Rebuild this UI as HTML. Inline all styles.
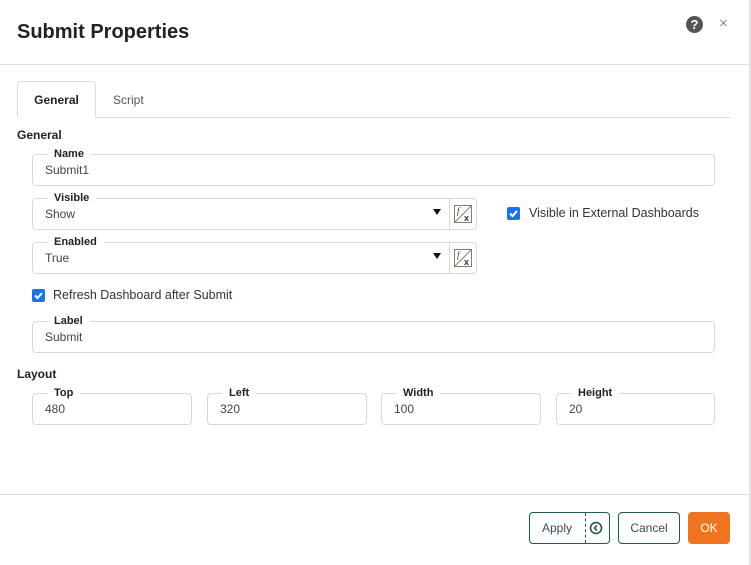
<!DOCTYPE html><html><head><style>
body{margin:0;width:751px;height:565px;background:#fff;font-family:"Liberation Sans",sans-serif;color:#333;position:relative;overflow:hidden}
.a{position:absolute}
.fld{position:absolute;border:1px solid #d8d8d8;border-radius:4px;box-sizing:border-box;height:32px}
.fld .lg{position:absolute;top:-8px;left:14px;background:#fff;padding:0 7px;font-size:11px;font-weight:bold;color:#222;line-height:14px}
.fld .v{position:absolute;left:12px;top:8px;font-size:12px;color:#444}
.fx{position:absolute;border:1px solid #d8d8d8;border-radius:0 4px 4px 0;box-sizing:border-box;width:28px;height:32px}
.cb{position:absolute;width:13px;height:13px;background:#1a73e8;border-radius:2px}
.sec{position:absolute;font-size:12px;font-weight:bold;color:#222}
.btn{position:absolute;border:1px solid #1e5a52;border-radius:4px;box-sizing:border-box;height:32px;font-size:12px;color:#3a4a5a;text-align:center;line-height:30px}
.arr{position:absolute;right:32px;top:10px;width:0;height:0;border-left:4px solid transparent;border-right:4px solid transparent;border-top:6px solid #111}
</style></head><body>
<div class="a" style="right:0;top:0;width:2px;height:565px;background:#e2e2e2"></div>
<div class="a" style="left:17px;top:21px;font-size:20px;font-weight:bold;color:#222">Submit Properties</div>
<div class="a" style="left:686px;top:16px;width:17px;height:17px;border-radius:50%;background:#555;color:#fff;font-size:13px;font-weight:bold;text-align:center;line-height:17px">?</div>
<div class="a" style="left:719px;top:15px;font-size:15px;color:#888">×</div>
<div class="a" style="left:0;top:64px;width:749px;height:1px;background:#e0e0e0"></div>
<div class="a" style="left:17px;top:117px;width:714px;height:1px;background:#ddd"></div>
<div class="a" style="left:17px;top:81px;width:79px;height:37px;box-sizing:border-box;border:1px solid #ddd;border-bottom:1px solid #fff;border-radius:4px 4px 0 0;background:#fff;font-size:12px;font-weight:bold;color:#222;text-align:center;line-height:36px">General</div>
<div class="a" style="left:113px;top:93px;font-size:12px;color:#555">Script</div>
<div class="sec" style="left:17px;top:128px">General</div>
<div class="fld" style="left:32px;top:154px;width:683px"><span class="lg">Name</span><span class="v">Submit1</span></div>
<div class="fld" style="left:32px;top:198px;width:418px;border-radius:4px 0 0 4px"><span class="lg">Visible</span><span class="v">Show</span><div class="arr" style="right:8px"></div></div>
<div class="fx" style="left:449px;top:198px"><svg class="a" style="left:4px;top:6px" width="18" height="18"><rect x="0.5" y="0.5" width="17" height="17" fill="none" stroke="#8a7a6a"/><line x1="1" y1="17" x2="17" y2="1" stroke="#8a7a6a"/><text x="3" y="9" font-size="9" font-style="italic" fill="#333" font-family="Liberation Serif">f</text><text x="10" y="16" font-size="9" font-weight="bold" fill="#333">x</text></svg></div>
<div class="cb" style="left:507px;top:207px"><svg width="13" height="13"><path d="M3 6.5l2.5 2.5 4.5-5" stroke="#fff" stroke-width="2" fill="none"/></svg></div>
<div class="a" style="left:529px;top:206px;font-size:12.5px;color:#333">Visible in External Dashboards</div>
<div class="fld" style="left:32px;top:242px;width:418px;border-radius:4px 0 0 4px"><span class="lg">Enabled</span><span class="v">True</span><div class="arr" style="right:8px"></div></div>
<div class="fx" style="left:449px;top:242px"><svg class="a" style="left:4px;top:6px" width="18" height="18"><rect x="0.5" y="0.5" width="17" height="17" fill="none" stroke="#8a7a6a"/><line x1="1" y1="17" x2="17" y2="1" stroke="#8a7a6a"/><text x="3" y="9" font-size="9" font-style="italic" fill="#333" font-family="Liberation Serif">f</text><text x="10" y="16" font-size="9" font-weight="bold" fill="#333">x</text></svg></div>
<div class="cb" style="left:32px;top:289px"><svg width="13" height="13"><path d="M3 6.5l2.5 2.5 4.5-5" stroke="#fff" stroke-width="2" fill="none"/></svg></div>
<div class="a" style="left:53px;top:288px;font-size:12.5px;color:#333">Refresh Dashboard after Submit</div>
<div class="fld" style="left:32px;top:321px;width:683px"><span class="lg">Label</span><span class="v">Submit</span></div>
<div class="sec" style="left:17px;top:367px">Layout</div>
<div class="fld" style="left:32px;top:393px;width:160px"><span class="lg">Top</span><span class="v">480</span></div>
<div class="fld" style="left:207px;top:393px;width:160px"><span class="lg">Left</span><span class="v">320</span></div>
<div class="fld" style="left:381px;top:393px;width:160px"><span class="lg">Width</span><span class="v">100</span></div>
<div class="fld" style="left:556px;top:393px;width:159px"><span class="lg">Height</span><span class="v">20</span></div>
<div class="a" style="left:0;top:494px;width:749px;height:1px;background:#e0e0e0"></div>
<div class="btn" style="left:529px;top:512px;width:81px"><span class="a" style="left:12px">Apply</span><span class="a" style="left:55px;top:0;height:30px;border-left:1px dashed #1e5a52"></span><svg class="a" style="left:59px;top:8px" width="14" height="14"><circle cx="7" cy="7" r="5.5" stroke="#1e4a44" stroke-width="1.5" fill="none"/><path d="M8 4.5L5.5 7 8 9.5" stroke="#1e4a44" stroke-width="1.5" fill="none"/></svg></div>
<div class="btn" style="left:618px;top:512px;width:62px">Cancel</div>
<div class="btn" style="left:688px;top:512px;width:42px;background:#ee7421;border-color:#ee7421;color:#fff">OK</div>
</body></html>
